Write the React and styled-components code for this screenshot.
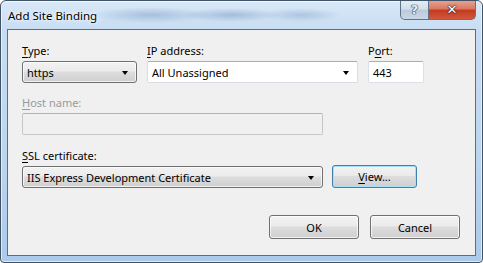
import React from "react";
import styled, { createGlobalStyle } from "styled-components";

const Global = createGlobalStyle`
  html, body { margin: 0; padding: 0; background: #ffffff; }
  body { font-family: "Noto Sans", "Open Sans", sans-serif; }
  * { box-sizing: border-box; }
`;

const Frame = styled.div`
  width: 483px;
  height: 263px;
  display: flex;
  flex-direction: column;
  border: 1px solid #3f5266;
  border-radius: 6px 6px 4px 4px;
  background:
    radial-gradient(ellipse 60px 8px at 150px 14px, rgba(70,110,160,0.3), transparent),
    radial-gradient(ellipse 50px 7px at 230px 14px, rgba(60,100,150,0.3), transparent),
    radial-gradient(ellipse 40px 7px at 300px 14px, rgba(70,110,160,0.25), transparent),
    linear-gradient(180deg, #d8e8f7 0%, #c6dcf2 12%, #bcd5ef 60%, #abc9ea 100%);
  box-shadow: inset 0 0 0 1px rgba(255,255,255,0.6);
  overflow: hidden;
`;

const TitleBar = styled.div`
  height: 28px;
  display: flex;
  align-items: flex-start;
  justify-content: space-between;
  padding-left: 7px;
`;

const Title = styled.div`
  font-family: "Noto Sans", sans-serif;
  font-size: 11.5px;
  color: #000;
  margin-top: 7px;
  text-shadow: 0 0 6px rgba(255,255,255,0.95), 0 0 3px rgba(255,255,255,0.95);
`;

const Caption = styled.div`
  display: flex;
  margin-right: 6px;
  margin-top: -1px;
`;

const CapBtn = styled.div`
  width: ${p => p.$w}px;
  height: 20px;
  display: flex;
  align-items: center;
  justify-content: center;
  border: 1px solid #5f7286;
  border-top: none;
  font-family: "DejaVu Sans", sans-serif;
  font-weight: bold;
  font-size: 13px;
  ${p => p.$close ? `
    border-radius: 0 0 5px 0;
    border-left: none;
    background: linear-gradient(180deg, #eaa594 0%, #d97a63 45%, #c43b20 55%, #d2573a 100%);
    color: #fff;
    text-shadow: 0 0 1px #3b1a14, 0 0 1px #3b1a14, 0 0 2px #3b1a14;
  ` : `
    border-radius: 0 0 0 5px;
    background: linear-gradient(180deg, #e6eef7 0%, #d4e0ed 45%, #bccbdc 55%, #c9d6e5 100%);
    color: #e9eef4;
    text-shadow: 0 0 1px #2c3640, 0 0 1px #2c3640, 0 0 1px #2c3640;
  `}
`;

const Client = styled.div`
  flex: 1;
  margin: 0 6px 6px 6px;
  border: 1px solid #5d6e80;
  background: #f0f0f0;
  padding: 13px 15px 0 14px;
  display: flex;
  flex-direction: column;
  font-family: "Noto Sans", sans-serif;
  font-size: 11px;
  color: #000;
`;

const Row = styled.div`
  display: flex;
  align-items: flex-end;
  gap: ${p => p.$gap || 9}px;
  margin-top: ${p => p.$mt || 0}px;
  justify-content: ${p => p.$end ? "flex-end" : "flex-start"};
`;

const Field = styled.div`
  display: flex;
  flex-direction: column;
  width: ${p => p.$w}px;
`;

const Label = styled.div`
  height: 15px;
  line-height: 15px;
  margin-bottom: 3px;
  white-space: nowrap;
  color: ${p => p.$disabled ? "#9a9a9a" : "#000"};
  u { text-decoration-thickness: 1px; text-underline-offset: 2px; }
`;

const ComboGray = styled.div`
  height: 22px;
  border: 1px solid #707070;
  border-radius: 3px;
  background: linear-gradient(180deg, #f2f2f2 0%, #ebebeb 45%, #dddddd 50%, #cfcfcf 100%);
  box-shadow: inset 0 0 0 1px rgba(255,255,255,0.7);
  display: flex;
  align-items: center;
  justify-content: space-between;
  padding: 0 8px 0 4px;
  white-space: nowrap;
`;

const ComboWhite = styled.div`
  height: 22px;
  border: 1px solid #d9dce2;
  border-top-color: #abadb3;
  border-radius: 2px;
  background: #fff;
  display: flex;
  align-items: center;
  justify-content: space-between;
  padding: 0 8px 0 4px;
  white-space: nowrap;
`;

const TextBox = styled.div`
  height: 22px;
  border: 1px solid ${p => p.$disabled ? "#c6c6c6" : "#dbdfe6"};
  border-top-color: ${p => p.$disabled ? "#b3b3b3" : "#abadb3"};
  border-radius: 2px;
  background: ${p => p.$disabled ? "#f0f0f0" : "#fff"};
  display: flex;
  align-items: center;
  padding: 0 4px;
`;

const Arrow = styled.span`
  width: 0;
  height: 0;
  border-left: 3.5px solid transparent;
  border-right: 3.5px solid transparent;
  border-top: 4px solid #000;
  margin-top: 1px;
`;

const Button = styled.div`
  width: ${p => p.$w}px;
  height: ${p => p.$h || 24}px;
  border: 1px solid ${p => p.$focus ? "#3c7fb1" : "#707070"};
  border-radius: 3px;
  background: linear-gradient(180deg, #f2f2f2 0%, #ebebeb 45%, #dddddd 50%, #cfcfcf 100%);
  box-shadow: inset 0 0 0 1px ${p => p.$focus ? "#a6dff7" : "rgba(255,255,255,0.75)"};
  display: flex;
  align-items: center;
  justify-content: center;
  u { text-decoration-thickness: 1px; text-underline-offset: 2px; }
`;

export default function App() {
  return (
    <>
      <Global />
      <Frame>
        <TitleBar>
          <Title>Add Site Binding</Title>
          <Caption>
            <CapBtn $w={29}>?</CapBtn>
            <CapBtn $w={47} $close>✕</CapBtn>
          </Caption>
        </TitleBar>
        <Client>
          <Row $gap={10}>
            <Field $w={115}>
              <Label><u>T</u>ype:</Label>
              <ComboGray>https<Arrow /></ComboGray>
            </Field>
            <Field $w={211}>
              <Label><u>I</u>P address:</Label>
              <ComboWhite>All Unassigned<Arrow /></ComboWhite>
            </Field>
            <Field $w={56}>
              <Label>P<u>o</u>rt:</Label>
              <TextBox>443</TextBox>
            </Field>
          </Row>
          <Row $mt={12}>
            <Field $w={301}>
              <Label $disabled><u>H</u>ost name:</Label>
              <TextBox $disabled />
            </Field>
          </Row>
          <Row $mt={13}>
            <Field $w={301}>
              <Label><u>S</u>SL certificate:</Label>
              <ComboGray>IIS Express Development Certificate<Arrow /></ComboGray>
            </Field>
            <Button $w={85} $h={23} $focus><span><u>V</u>iew...</span></Button>
          </Row>
          <Row $mt={27} $gap={11} $end>
            <Button $w={90}>OK</Button>
            <Button $w={90}>Cancel</Button>
          </Row>
        </Client>
      </Frame>
    </>
  );
}
